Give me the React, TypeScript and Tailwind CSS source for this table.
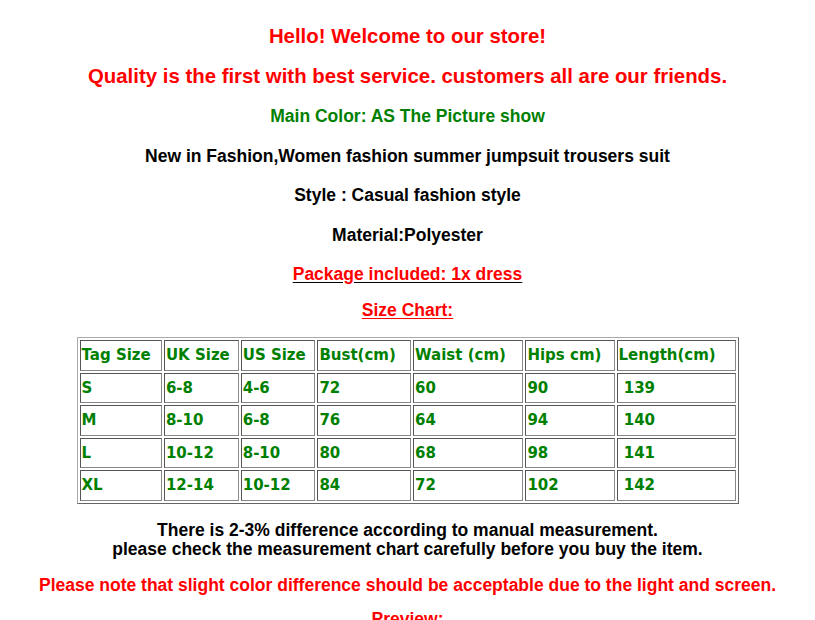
const rows = [
  ["S", "6-8", "4-6", "72", "60", "90", "\u00a0139"],
  ["M", "8-10", "6-8", "76", "64", "94", "\u00a0140"],
  ["L", "10-12", "8-10", "80", "68", "98", "\u00a0141"],
  ["XL", "12-14", "10-12", "84", "72", "102", "\u00a0142"],
];

const headers = ["Tag Size", "UK Size", "US Size", "Bust(cm)", "Waist (cm)", "Hips cm)", "Length(cm)"];
const widths = ["w-[84px]", "w-[76px]", "w-[76px]", "w-[96px]", "w-[113px]", "w-[91px]", "w-[122px]"];

function Cell({ children, w }: { children: React.ReactNode; w?: string }) {
  return (
    <td
      className={`${w ?? ""} h-[30.5px] border border-t-[#555] border-l-[#555] border-b-[#888] border-r-[#888] px-[1px] align-middle text-left whitespace-nowrap`}
    >
      {children}
    </td>
  );
}

export default function App() {
  return (
    <div
      className="w-[815px] h-[620px] overflow-hidden bg-white flex flex-col items-center text-center font-bold"
      style={{ fontFamily: '"Liberation Sans", Arial, sans-serif' }}
    >
      <p className="mt-[24px] text-[20.4px] leading-[24px] text-[#ff0000]">Hello! Welcome to our store!</p>
      <p className="mt-[16px] text-[20.4px] leading-[24px] text-[#ff0000]">
        Quality is the first with best service. customers all are our friends.
      </p>
      <p className="mt-[18px] text-[17.5px] leading-[20px] text-[#008000]">Main Color: AS The Picture show</p>
      <p className="mt-[20px] text-[17.5px] leading-[20px] text-black">
        New in Fashion,Women fashion summer jumpsuit trousers suit
      </p>
      <p className="mt-[19px] text-[17.5px] leading-[20px] text-black">Style : Casual fashion style</p>
      <p className="mt-[20px] text-[17.5px] leading-[20px] text-black">Material:Polyester</p>
      <p className="mt-[19px] text-[17.5px] leading-[20px] text-[#ff0000] underline decoration-black underline-offset-2">
        Package included: 1x dress
      </p>
      <p className="mt-[16px] text-[17.5px] leading-[20px] text-[#ff0000] underline underline-offset-2">Size Chart:</p>

      <table
        className="mt-[17px] border-separate border-spacing-[2px] border border-t-[#aaa] border-l-[#aaa] border-b-[#666] border-r-[#666] text-[15px] leading-[18px] text-[#008000] w-[662px]"
        style={{ fontFamily: '"DejaVu Sans", Verdana, sans-serif' }}
      >
        <tbody>
          <tr>
            {headers.map((h, i) => (
              <Cell key={h} w={widths[i]}>
                {h}
              </Cell>
            ))}
          </tr>
          {rows.map((r) => (
            <tr key={r[0]}>
              {r.map((c, i) => (
                <Cell key={i}>{c}</Cell>
              ))}
            </tr>
          ))}
        </tbody>
      </table>

      <p className="mt-[17px] text-[17.5px] leading-[19px] text-black">
        There is 2-3% difference according to manual measurement.
        <br />
        please check the measurement chart carefully before you buy the item.
      </p>
      <p className="mt-[16px] text-[17.5px] leading-[20px] text-[#ff0000]">
        Please note that slight color difference should be acceptable due to the light and screen.
      </p>
      <p className="mt-[14px] text-[17.5px] leading-[20px] text-[#ff0000] underline">Preview:</p>
    </div>
  );
}
